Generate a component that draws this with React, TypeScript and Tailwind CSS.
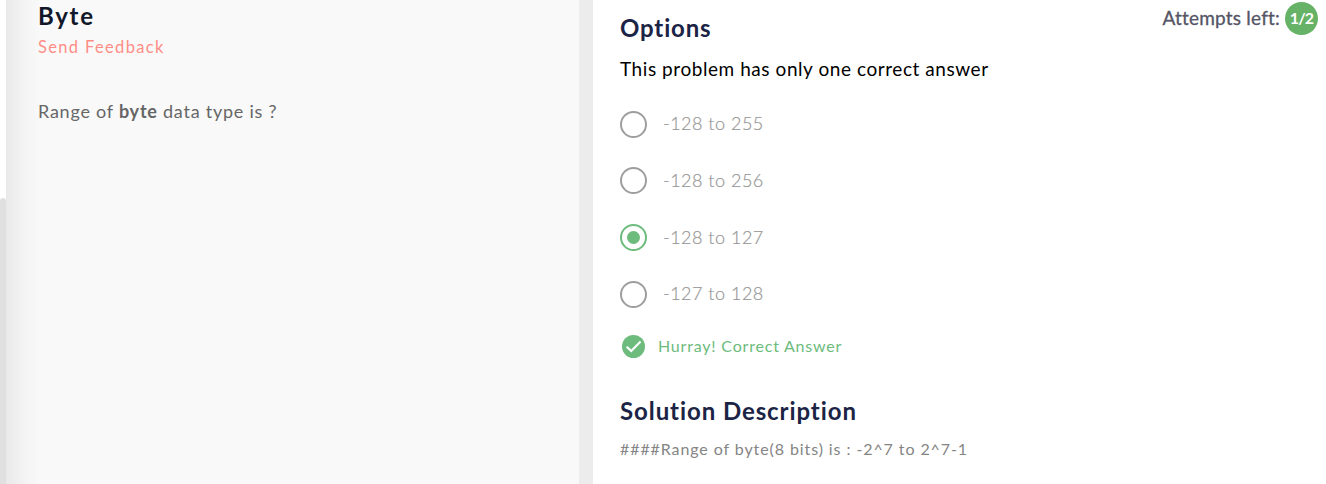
import React from 'react';

const options = ['-128 to 255', '-128 to 256', '-128 to 127', '-127 to 128'];
const selected = 2;

function Radio({ checked }: { checked: boolean }) {
  return (
    <span
      className={`flex size-[27px] shrink-0 items-center justify-center rounded-full border-2 ${
        checked ? 'border-[#6dbb7d]' : 'border-[#9e9e9e]'
      }`}
    >
      {checked && <span className="size-[13px] rounded-full bg-[#6dbb7d]" />}
    </span>
  );
}

function CheckBadge() {
  return (
    <svg className="size-[23px]" viewBox="0 0 23 23">
      <circle cx="11.5" cy="11.5" r="11.5" fill="#6dbb7d" />
      <path d="M4.7 11.7 L9.2 16 L18.6 6.6" fill="none" stroke="#fff" strokeWidth="2.1" />
    </svg>
  );
}

export default function App() {
  return (
    <div className="flex h-[484px] w-full overflow-hidden whitespace-nowrap bg-white font-['Lato',sans-serif]">
      <div className="flex w-1.5 shrink-0 flex-col">
        <div className="h-[198px] bg-white" />
        <div className="flex-1 rounded-t-[3px] bg-[#e0e0e0]" />
      </div>

      <section className="flex w-[573px] shrink-0 flex-col bg-[#f9f9f9] bg-linear-to-r from-[#e9e9e9] via-[#f3f3f3] via-[3%] to-[#f9f9f9] to-[6%] pl-8">
        <h1 className="h-8 text-[24px] leading-8 font-bold tracking-[1.7px] text-[#121829]">Byte</h1>
        <a className="mt-[3px] h-6 text-[16.5px] leading-6 tracking-[1.35px] text-[#ff8d87]">Send Feedback</a>
        <p className="mt-10 h-6 text-[18px] leading-6 tracking-[0.76px] text-[#666]">
          Range of <b>byte</b> data type is ?
        </p>
      </section>

      <div className="w-3.5 shrink-0 bg-[#ececec]" />

      <main className="flex flex-1 justify-between pr-2 pl-[27px]">
        <div className="flex flex-col">
          <h2 className="mt-3 h-8 text-[24px] leading-8 font-bold tracking-[0.85px] text-[#1c2445]">Options</h2>
          <p className="mt-[13px] h-6 text-[19px] leading-6 tracking-[0.56px] text-black">
            This problem has only one correct answer
          </p>
          <div className="mt-[29.8px] flex h-[197px] flex-col justify-between">
            {options.map((label, i) => (
              <label key={label} className="flex items-center gap-4">
                <Radio checked={i === selected} />
                <span className="pb-[1.8px] text-[18px] leading-6 font-light tracking-[0.5px] text-[#929292] [-webkit-text-stroke:0.2px_#a0a0a0]">
                  {label}
                </span>
              </label>
            ))}
          </div>
          <div className="mt-[27.2px] ml-0.5 flex h-[23px] items-center gap-[13px]">
            <CheckBadge />
            <span className="pb-px text-[16px] leading-6 tracking-[0.8px] text-[#6dbb7d]">Hurray! Correct Answer</span>
          </div>
          <h2 className="mt-[37px] h-8 text-[24px] leading-8 font-bold tracking-[0.92px] text-[#1c2445]">
            Solution Description
          </h2>
          <p className="mt-[10px] h-6 text-[16px] leading-6 tracking-[0.91px] text-[#858585]">
            ####Range of byte(8 bits) is : -2^7 to 2^7-1
          </p>
        </div>

        <div className="mt-0.5 flex h-8 items-center gap-[5px]">
          <span className="text-[19px] tracking-[0.2px] text-[#545565] [-webkit-text-stroke:0.3px_#545565]">
            Attempts left:
          </span>
          <span className="flex size-[33px] items-center justify-center rounded-full bg-[#66b266] text-[16px] font-bold tracking-[-0.8px] text-white">
            1/2
          </span>
        </div>
      </main>
    </div>
  );
}
